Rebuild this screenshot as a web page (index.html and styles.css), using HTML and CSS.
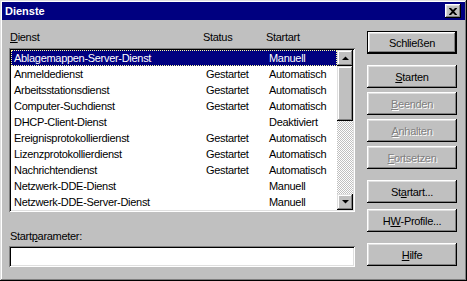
FILE: index.html
```html
<!DOCTYPE html>
<html lang="de">
<head>
    <meta charset="UTF-8">
    <title>Dienste</title>
    <link rel="stylesheet" href="styles.css">
</head>
<body>
    <div class="window">
        <div class="titlebar">
            <span class="title">Dienste</span>
            <span class="close-btn">
                <svg width="8" height="7" viewBox="0 0 8 7">
                    <path d="M0 0h2l2 2 2-2h2v0.5L5.2 3.5 8 6.5V7H6L4 5 2 7H0v-0.5L2.8 3.5 0 0.5z" fill="#000"/>
                </svg>
            </span>
        </div>

        <div class="content">
            <div class="left">
                <div class="list-head">
                    <span class="h-name"><u>D</u>ienst</span>
                    <span class="h-status">Status</span>
                    <span class="h-start">Startart</span>
                </div>

                <div class="listbox">
                    <div class="rows">
                        <div class="row selected"><span class="c-name">Ablagemappen-Server-Dienst</span><span class="c-status"></span><span class="c-start">Manuell</span></div>
                        <div class="row"><span class="c-name">Anmeldedienst</span><span class="c-status">Gestartet</span><span class="c-start">Automatisch</span></div>
                        <div class="row"><span class="c-name">Arbeitsstationsdienst</span><span class="c-status">Gestartet</span><span class="c-start">Automatisch</span></div>
                        <div class="row"><span class="c-name">Computer-Suchdienst</span><span class="c-status">Gestartet</span><span class="c-start">Automatisch</span></div>
                        <div class="row"><span class="c-name">DHCP-Client-Dienst</span><span class="c-status"></span><span class="c-start">Deaktiviert</span></div>
                        <div class="row"><span class="c-name">Ereignisprotokollierdienst</span><span class="c-status">Gestartet</span><span class="c-start">Automatisch</span></div>
                        <div class="row"><span class="c-name">Lizenzprotokollierdienst</span><span class="c-status">Gestartet</span><span class="c-start">Automatisch</span></div>
                        <div class="row"><span class="c-name">Nachrichtendienst</span><span class="c-status">Gestartet</span><span class="c-start">Automatisch</span></div>
                        <div class="row"><span class="c-name">Netzwerk-DDE-Dienst</span><span class="c-status"></span><span class="c-start">Manuell</span></div>
                        <div class="row"><span class="c-name">Netzwerk-DDE-Server-Dienst</span><span class="c-status"></span><span class="c-start">Manuell</span></div>
                    </div>
                    <div class="scrollbar">
                        <div class="sb-btn">
                            <svg width="7" height="4" viewBox="0 0 7 4"><polygon points="0,4 7,4 3.5,0.5" fill="#000"/></svg>
                        </div>
                        <div class="sb-thumb"></div>
                        <div class="sb-track"></div>
                        <div class="sb-btn">
                            <svg width="7" height="4" viewBox="0 0 7 4"><polygon points="0,0 7,0 3.5,3.5" fill="#000"/></svg>
                        </div>
                    </div>
                </div>

                <div class="param-label">Start<u>p</u>arameter:</div>
                <div class="field"></div>
            </div>

            <div class="buttons">
                <div class="btn default">Schließen</div>
                <div class="btn first"><u>S</u>tarten</div>
                <div class="btn disabled"><u>B</u>eenden</div>
                <div class="btn disabled"><u>A</u>nhalten</div>
                <div class="btn disabled"><u>F</u>ortsetzen</div>
                <div class="btn group">St<u>a</u>rtart...</div>
                <div class="btn near">H<u>W</u>-Profile...</div>
                <div class="btn group"><u>H</u>ilfe</div>
            </div>
        </div>
    </div>
</body>
</html>
```

FILE: styles.css
```css
* {
    margin: 0;
    padding: 0;
    box-sizing: border-box;
}

body {
    background: #c0c0c0;
    font-family: 'Liberation Sans', Arial, sans-serif;
    font-size: 11px;
    letter-spacing: -0.3px;
    color: #000;
}

u {
    text-decoration: underline;
    text-underline-offset: 1px;
}

/* Fensterrahmen */
.window {
    width: 467px;
    height: 281px;
    padding: 2px;
    background: #c0c0c0;
    box-shadow: inset -1px -1px #000, inset 1px 1px #dfdfdf,
                inset -2px -2px #808080, inset 2px 2px #fff;
}

.titlebar {
    height: 18px;
    background: #000080;
    color: #fff;
    display: flex;
    align-items: center;
    justify-content: space-between;
    padding: 0 4px 0 3px;
}

.title {
    font-weight: bold;
    font-size: 11px;
    letter-spacing: 0;
}

.close-btn {
    width: 16px;
    height: 14px;
    background: #c0c0c0;
    display: flex;
    align-items: center;
    justify-content: center;
    box-shadow: inset -1px -1px #000, inset 1px 1px #fff,
                inset -2px -2px #808080, inset 2px 2px #dfdfdf;
}

.content {
    display: flex;
    gap: 12px;
    padding: 0 8px 0 7px;
}

/* Linke Spalte */
.left {
    width: 346px;
    display: flex;
    flex-direction: column;
}

.list-head {
    display: flex;
    margin-top: 11px;
    line-height: 13px;
    height: 13px;
}

.h-name {
    width: 194px;
    padding-left: 1px;
}

.h-status {
    width: 63px;
}

.listbox {
    margin-top: 4px;
    height: 164px;
    padding: 2px;
    background: #fff;
    display: flex;
    box-shadow: inset 1px 1px #808080, inset -1px -1px #fff,
                inset 2px 2px #000, inset -2px -2px #dfdfdf;
}

.rows {
    flex: 1;
}

.row {
    display: flex;
    height: 16px;
    line-height: 16px;
    padding-left: 3px;
    white-space: nowrap;
}

.row.selected {
    background: #000080;
    color: #fff;
    outline: 1px dotted #ffffa0;
    outline-offset: -1px;
}

.c-name {
    width: 192px;
}

.c-status {
    width: 63px;
}

.scrollbar {
    width: 16px;
    display: flex;
    flex-direction: column;
}

.sb-btn,
.sb-thumb {
    background: #c0c0c0;
    box-shadow: inset -1px -1px #000, inset 1px 1px #dfdfdf,
                inset -2px -2px #808080, inset 2px 2px #fff;
}

.sb-btn {
    height: 16px;
    display: flex;
    align-items: center;
    justify-content: center;
}

.sb-thumb {
    height: 55px;
}

.sb-track {
    flex: 1;
    background-color: #c0c0c0;
    background-image: conic-gradient(#fff 25%, #c0c0c0 0 50%, #fff 0 75%, #c0c0c0 0);
    background-size: 2px 2px;
}

.param-label {
    margin-top: 18px;
    line-height: 13px;
    padding-left: 1px;
}

.field {
    margin-top: 3px;
    height: 21px;
    background: #fff;
    box-shadow: inset 1px 1px #808080, inset -1px -1px #fff,
                inset 2px 2px #000, inset -2px -2px #dfdfdf;
}

/* Schaltflächen rechts */
.buttons {
    width: 90px;
    display: flex;
    flex-direction: column;
    padding-top: 11px;
}

.btn {
    height: 23px;
    display: flex;
    align-items: center;
    justify-content: center;
    background: #c0c0c0;
    box-shadow: inset -1px -1px #000, inset 1px 1px #fff,
                inset -2px -2px #808080, inset 2px 2px #dfdfdf;
    margin-top: 4px;
}

.btn.default {
    margin-top: 0;
    border: 1px solid #000;
}

.btn.first,
.btn.group {
    margin-top: 11px;
}

.btn.near {
    margin-top: 6px;
}

.btn.disabled {
    color: #808080;
    text-shadow: 1px 1px #fff;
}
```
